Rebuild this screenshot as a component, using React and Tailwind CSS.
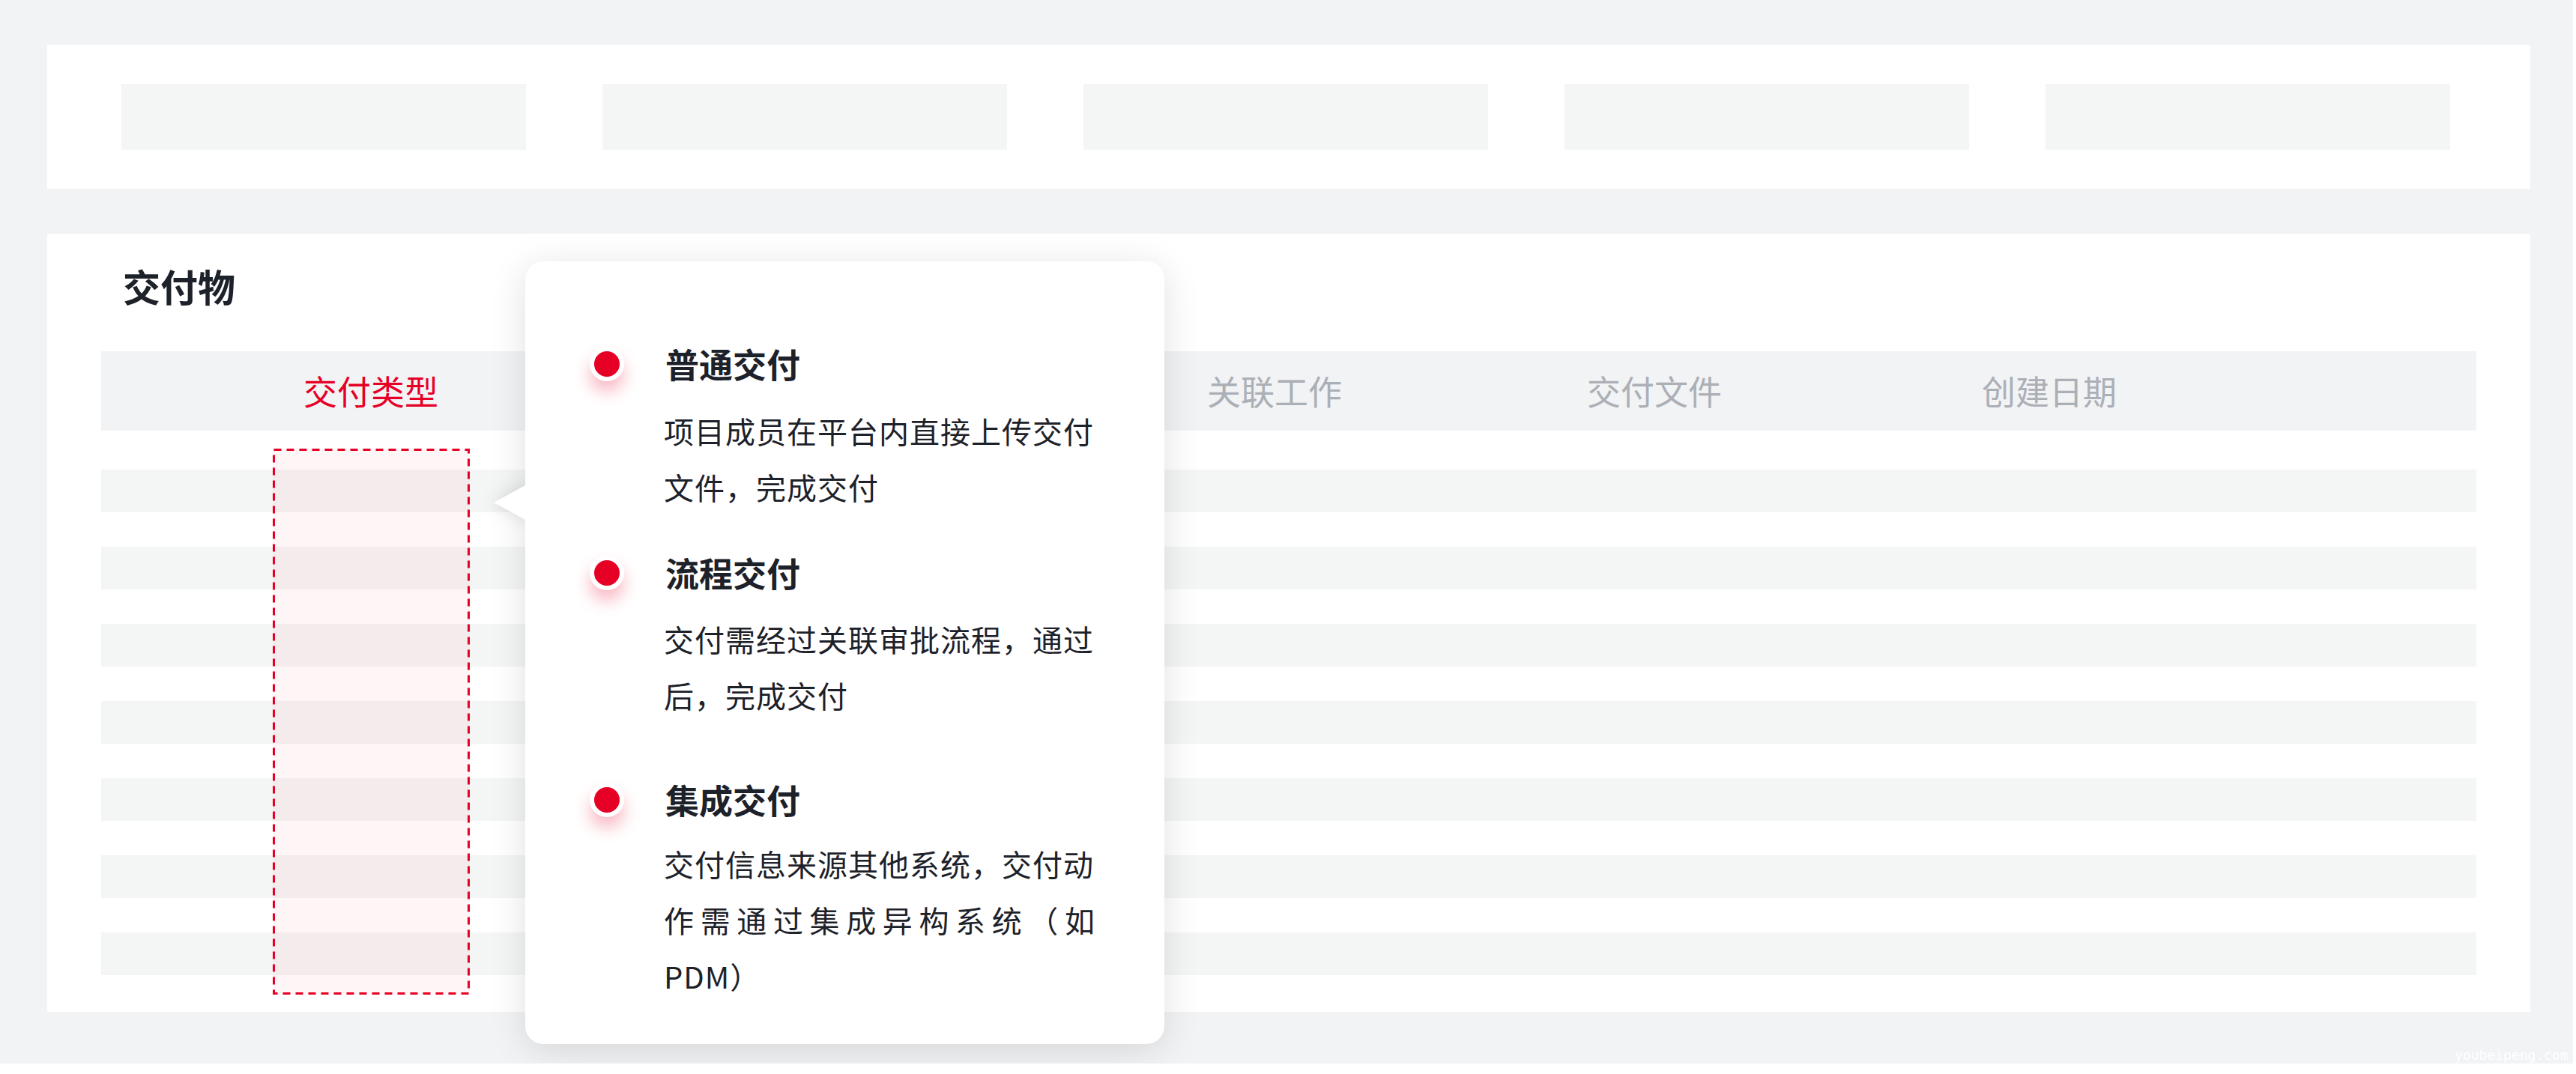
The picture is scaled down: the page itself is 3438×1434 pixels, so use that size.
import React from "react";

const FONT = { fontFamily: '"Noto Sans CJK SC", "Noto Sans", sans-serif' };

const columns = [
  { label: "关联工作", width: "w-[507px]" },
  { label: "交付文件", width: "w-[527px]" },
  { label: "创建日期", width: "w-[400px]" },
];

const deliveryTypes = [
  {
    title: "普通交付",
    lines: ["项目成员在平台内直接上传交付", "文件，完成交付"],
    top: "mt-0",
    descTop: "mt-[22px]",
  },
  {
    title: "流程交付",
    lines: ["交付需经过关联审批流程，通过", "后，完成交付"],
    top: "mt-[47px]",
    descTop: "mt-[21px]",
  },
  {
    title: "集成交付",
    lines: ["交付信息来源其他系统，交付动", "作需通过集成异构系统（如", "PDM）"],
    justify: 1,
    top: "mt-[72px]",
    descTop: "mt-[18px]",
  },
];

const Dot = () => (
  <div className="h-[60px] flex items-center pl-[86px]">
    <div className="w-[46px] h-[46px] rounded-full bg-[#e60026] border-[6px] border-white shadow-[0_14px_22px_rgba(230,0,38,0.28)]" />
  </div>
);

const TypeTooltip = () => (
  <div className="absolute left-[701px] top-[349px] w-[853px] h-[1045px]">
    <div className="w-full h-full rounded-[24px] bg-white shadow-[0_8px_50px_rgba(0,0,0,0.12)] pt-[107px] pr-[92px]">
      {deliveryTypes.map((t) => (
        <div key={t.title} className={`grid grid-cols-[185px_1fr] ${t.top}`}>
          <Dot />
          <div className="h-[60px] flex items-center pl-[2px] text-[45px] font-bold text-[#1d2129] leading-[60px]">
            {t.title}
          </div>
          <div />
          <div className={`${t.descTop} text-[40px] tracking-[1px] leading-[75px] text-[#1d2129]`}>
            {t.lines.map((line, i) => (
              <div
                key={i}
                className={
                  t.justify === i
                    ? "whitespace-nowrap text-justify [text-align-last:justify]"
                    : "whitespace-nowrap"
                }
              >
                {line}
              </div>
            ))}
          </div>
        </div>
      ))}
    </div>
    {/* arrow pointing at the highlighted column */}
    <div className="absolute left-[-60px] top-[262px] w-[60px] h-[120px] overflow-hidden">
      <svg
        width="80"
        height="120"
        viewBox="0 0 80 120"
        className="[filter:drop-shadow(-4px_0_10px_rgba(0,0,0,0.1))]"
      >
        <polygon points="18,60 60,37 72,37 72,83 60,83" fill="#fff" />
      </svg>
    </div>
  </div>
);

export default function App() {
  return (
    <div className="w-[3438px] h-[1434px] bg-white" style={FONT}>
      <div className="relative w-[3434px] h-[1420px] bg-[#f2f3f5] pt-[60px] pl-[63px] overflow-hidden">
        {/* filter row skeleton */}
        <div className="w-[3314px] h-[192px] bg-white pt-[52px] pl-[99px] flex gap-[102px]">
          {[0, 1, 2, 3, 4].map((i) => (
            <div key={i} className="w-[540px] h-[88px] bg-[#f4f5f5]" />
          ))}
        </div>

        {/* deliverables table */}
        <div className="mt-[60px] w-[3314px] h-[1039px] bg-white pt-[44px]">
          <div className="pl-[101px] text-[50px] leading-[50px] font-bold text-[#1d2129]">
            交付物
          </div>
          <div className="mx-[72px] mt-[63px]">
            <div className="h-[106px] bg-[#f2f3f5] flex items-center text-[45px] text-[#abafb6]">
              <div className="w-[229px]" />
              <div className="w-[262px] text-center text-[#e60026]">交付类型</div>
              <div className="w-[985px]" />
              {columns.map((c) => (
                <div key={c.label} className={c.width}>
                  {c.label}
                </div>
              ))}
            </div>
            <div className="mt-[52px] flex flex-col gap-[46px]">
              {[0, 1, 2, 3, 4, 5, 6].map((i) => (
                <div key={i} className="h-[57px] bg-[#f4f5f5]" />
              ))}
            </div>
          </div>
        </div>

        {/* highlighted column annotation */}
        <div className="absolute left-[364px] top-[599px] w-[263px] h-[729px] bg-[rgba(230,0,38,0.04)]">
          <svg width="263" height="729" className="absolute inset-0">
            <rect
              x="1.5"
              y="1.5"
              width="260"
              height="726"
              fill="none"
              stroke="#e60026"
              strokeWidth="3"
              strokeDasharray="10 7"
            />
          </svg>
        </div>

        <TypeTooltip />

        <div
          className="absolute left-[3276px] top-[1398px] text-[18px] text-white leading-[22px]"
          style={{ fontFamily: '"DejaVu Sans Mono", monospace' }}
        >
          youbeipeng.com
        </div>
      </div>
    </div>
  );
}
